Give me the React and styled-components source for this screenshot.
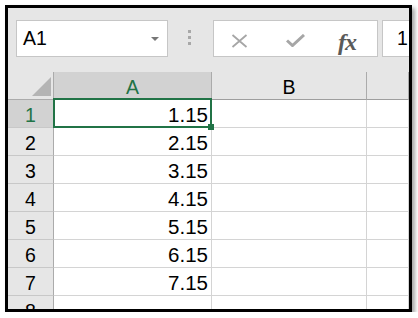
import React from "react";
import styled, { createGlobalStyle } from "styled-components";

const Global = createGlobalStyle`
  html, body { margin: 0; padding: 0; background: #ffffff; }
  body { font-family: "Liberation Sans", Arial, sans-serif; }
  * { box-sizing: border-box; }
`;

const Frame = styled.div`
  margin: 5px 0 0 5px;
  width: 407px;
  height: 307px;
  border: 3px solid #000;
  background: #e6e6e6;
  box-shadow: 3px 3px 4px rgba(0, 0, 0, 0.35);
  overflow: hidden;
  display: flex;
  flex-direction: column;
`;

const Toolbar = styled.div`
  flex: none;
  height: 64px;
  display: flex;
  align-items: flex-start;
  padding: 12px 0 0 8px;
  white-space: nowrap;
`;

const Box = styled.div`
  flex: none;
  height: 37px;
  background: #ffffff;
  border: 1px solid #c6c6c6;
  display: flex;
  align-items: center;
`;

const NameBox = styled(Box)`
  width: 152px;
  padding: 0 8px 0 6px;
  justify-content: space-between;
  font-size: 19.5px;
  color: #000;
`;

const DropArrow = styled.span`
  width: 0;
  height: 0;
  border-left: 4px solid transparent;
  border-right: 4px solid transparent;
  border-top: 4px solid #777;
  margin-top: 1px;
`;

const Grip = styled.div`
  flex: none;
  margin: 10px 0 0 20px;
  display: flex;
  flex-direction: column;
  gap: 3px;
`;

const GripDot = styled.span`
  width: 3px;
  height: 3px;
  background: #a8a8a8;
`;

const FormulaBox = styled(Box)`
  width: 165px;
  margin-left: 22px;
  padding-left: 17px;
  align-items: flex-start;
  padding-top: 12px;
`;

const IconSlot = styled.span`
  display: flex;
  margin-left: ${(p) => p.$gap || 0}px;
  margin-top: ${(p) => p.$top || 0}px;
`;

const Fx = styled.span`
  font-family: "Liberation Serif", "Times New Roman", serif;
  font-style: italic;
  font-weight: bold;
  font-size: 24px;
  line-height: 20px;
  color: #5a5a5a;
  letter-spacing: -1px;
`;

const ValueBox = styled(Box)`
  width: 120px;
  margin-left: 4px;
  padding-left: 14px;
  font-size: 19.5px;
  color: #000;
`;

const Sheet = styled.div`
  flex: 1;
  overflow: hidden;
  display: grid;
  grid-template-columns: 46px 158px 155px 1fr;
  grid-auto-rows: 28px;
  background: #ffffff;
`;

const Corner = styled.div`
  background: #e6e6e6;
  border-right: 1px solid #ababab;
  border-bottom: 1px solid #ababab;
  display: flex;
  justify-content: flex-end;
  align-items: flex-end;
  padding: 0 2px 3px 0;
`;

const ColHead = styled.div`
  background: ${(p) => (p.$active ? "#d2d2d2" : "#e6e6e6")};
  color: ${(p) => (p.$active ? "#217346" : "#000")};
  border-right: 1px solid #ababab;
  border-bottom: 1px solid #9e9e9e;
  font-size: 19.5px;
  line-height: 24px;
  padding-top: 3px;
  text-align: center;
`;

const RowHead = styled.div`
  background: ${(p) => (p.$active ? "#d2d2d2" : "#e6e6e6")};
  color: ${(p) => (p.$active ? "#217346" : "#000")};
  border-right: 1px solid #ababab;
  border-bottom: 1px solid #c8c8c8;
  font-size: 19.5px;
  line-height: 24px;
  padding-top: 3px;
  text-align: center;
`;

const Cell = styled.div`
  position: relative;
  border-right: 1px solid #d4d4d4;
  border-bottom: 1px solid #d4d4d4;
  font-size: 20.5px;
  line-height: 24px;
  padding: 3px 3px 0 0;
  text-align: right;
  color: #000;
  white-space: nowrap;
  z-index: ${(p) => (p.$selected ? 2 : 0)};
`;

const Selection = styled.div`
  position: absolute;
  top: -2px;
  left: -1px;
  right: -1px;
  bottom: -1px;
  border: 2px solid #217346;
  pointer-events: none;
`;

const Handle = styled.span`
  position: absolute;
  right: -4px;
  bottom: -4px;
  width: 6px;
  height: 6px;
  background: #217346;
`;

const rows = [1, 2, 3, 4, 5, 6, 7, 8];
const values = { 1: "1.15", 2: "2.15", 3: "3.15", 4: "4.15", 5: "5.15", 6: "6.15", 7: "7.15" };

export default function App() {
  return (
    <>
      <Global />
      <Frame>
        <Toolbar>
          <NameBox>
            <span>A1</span>
            <DropArrow />
          </NameBox>
          <Grip>
            <GripDot />
            <GripDot />
            <GripDot />
          </Grip>
          <FormulaBox>
            <IconSlot $top={1}>
              <svg width="17" height="14" viewBox="0 0 17 14">
                <path d="M1.5 1 L15.5 13 M15.5 1 L1.5 13" stroke="#a6a6a6" strokeWidth="1.8" fill="none" />
              </svg>
            </IconSlot>
            <IconSlot $gap={38} $top={1}>
              <svg width="19" height="13" viewBox="0 0 19 13">
                <path d="M1 6.5 L6.5 11.5 L18 1" stroke="#a6a6a6" strokeWidth="3" fill="none" />
              </svg>
            </IconSlot>
            <IconSlot $gap={33} $top={-1}>
              <Fx>fx</Fx>
            </IconSlot>
          </FormulaBox>
          <ValueBox>1.15</ValueBox>
        </Toolbar>
        <Sheet>
          <Corner>
            <svg width="19" height="19" viewBox="0 0 19 19">
              <polygon points="19,0 19,19 0,19" fill="#b4b4b4" />
            </svg>
          </Corner>
          <ColHead $active>A</ColHead>
          <ColHead>B</ColHead>
          <ColHead />
          {rows.map((r) => (
            <React.Fragment key={r}>
              <RowHead $active={r === 1}>{r}</RowHead>
              <Cell $selected={r === 1}>
                {values[r] || ""}
                {r === 1 && (
                  <Selection>
                    <Handle />
                  </Selection>
                )}
              </Cell>
              <Cell />
              <Cell />
            </React.Fragment>
          ))}
        </Sheet>
      </Frame>
    </>
  );
}
